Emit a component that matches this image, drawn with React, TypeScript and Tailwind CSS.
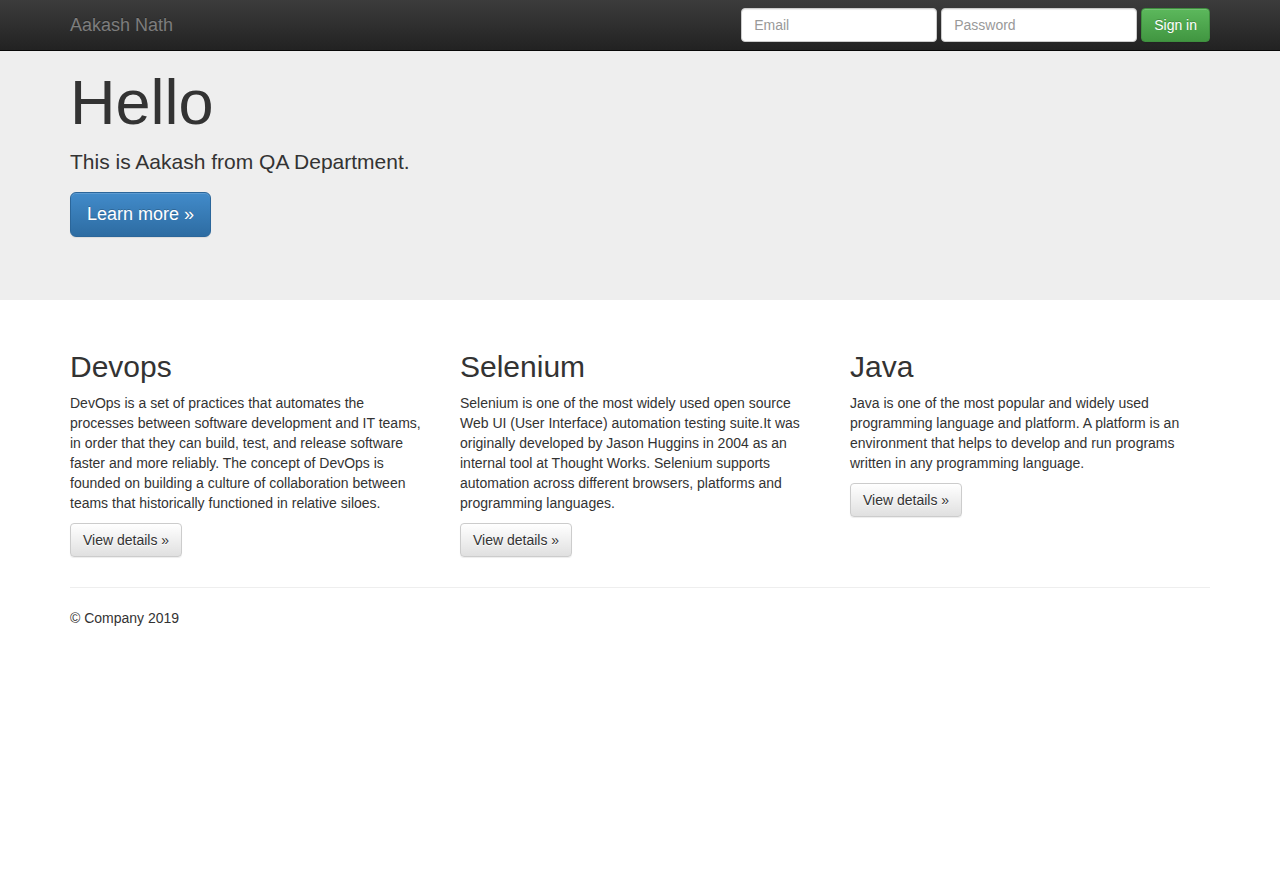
import React from "react";

const cols = [
  {
    title: "Devops",
    text: "DevOps is a set of practices that automates the processes between software development and IT teams, in order that they can build, test, and release software faster and more reliably. The concept of DevOps is founded on building a culture of collaboration between teams that historically functioned in relative siloes.",
  },
  {
    title: "Selenium",
    text: "Selenium is one of the most widely used open source Web UI (User Interface) automation testing suite.It was originally developed by Jason Huggins in 2004 as an internal tool at Thought Works. Selenium supports automation across different browsers, platforms and programming languages.",
  },
  {
    title: "Java",
    text: "Java is one of the most popular and widely used programming language and platform. A platform is an environment that helps to develop and run programs written in any programming language.",
  },
];

export default function App() {
  return (
    <div
      className="min-h-[879px] bg-white text-[#333] text-[14px] leading-[20px]"
      style={{ fontFamily: '"Liberation Sans", Arial, Helvetica, sans-serif' }}
    >
      <nav className="h-[51px] border-b border-[#080808] bg-[linear-gradient(to_bottom,#3c3c3c_0%,#222222_100%)]">
        <div className="w-[1170px] mx-auto px-[15px] flex items-start justify-between">
          <a className="block h-[50px] py-[15px] text-[18px] leading-[20px] text-[#7d7d7d] [text-shadow:0_-1px_0_rgba(0,0,0,0.25)]">
            Aakash Nath
          </a>
          <form className="flex items-center gap-[4px] mt-[8px]">
            <input
              placeholder="Email"
              className="w-[196px] h-[34px] px-[12px] py-[6px] text-[14px] leading-[20px] text-[#555] bg-white border border-[#ccc] rounded-[4px] shadow-[inset_0_1px_1px_rgba(0,0,0,0.075)] placeholder:text-[#999] outline-none"
            />
            <input
              placeholder="Password"
              type="password"
              className="w-[196px] h-[34px] px-[12px] py-[6px] text-[14px] leading-[20px] text-[#555] bg-white border border-[#ccc] rounded-[4px] shadow-[inset_0_1px_1px_rgba(0,0,0,0.075)] placeholder:text-[#999] outline-none"
            />
            <button
              type="button"
              className="h-[34px] px-[12px] py-[6px] text-[14px] leading-[20px] text-white border border-[#3e8f3e] rounded-[4px] bg-[linear-gradient(to_bottom,#5cb85c_0%,#419641_100%)] [text-shadow:0_-1px_0_rgba(0,0,0,0.2)] shadow-[inset_0_1px_0_rgba(255,255,255,0.15),0_1px_1px_rgba(0,0,0,0.075)]"
            >
              Sign in
            </button>
          </form>
        </div>
      </nav>

      <div className="bg-[#eeeeee] h-[249px]">
        <div className="w-[1170px] mx-auto px-[15px] pt-[17px]">
          <h1 className="text-[63px] leading-[1.1] font-normal mb-[10px]">Hello</h1>
          <p className="text-[21px] leading-[30px] font-[200] mb-[15px]">
            This is Aakash from QA Department.
          </p>
          <p>
            <a className="inline-block px-[16px] py-[10px] text-[18px] leading-[23px] text-white border border-[#2b669a] rounded-[6px] bg-[linear-gradient(to_bottom,#428bca_0%,#2d6ca2_100%)] [text-shadow:0_-1px_0_rgba(0,0,0,0.2)] shadow-[inset_0_1px_0_rgba(255,255,255,0.15),0_1px_1px_rgba(0,0,0,0.075)]">
              Learn more »
            </a>
          </p>
        </div>
      </div>

      <div className="w-[1170px] mx-auto px-[15px] pt-[30px]">
        <div className="grid grid-cols-3 -mx-[15px]">
          {cols.map((c) => (
            <div key={c.title} className="px-[15px]">
              <h2 className="text-[30px] leading-[33px] font-normal mt-[20px] mb-[10px]">{c.title}</h2>
              <p className="mb-[10px]">{c.text}</p>
              <p>
                <a className="inline-block px-[12px] py-[6px] text-[14px] leading-[20px] text-[#333] border border-[#ccc] rounded-[4px] bg-[linear-gradient(to_bottom,#ffffff_0%,#e0e0e0_100%)] [text-shadow:0_1px_0_#fff] shadow-[inset_0_1px_0_rgba(255,255,255,0.15),0_1px_1px_rgba(0,0,0,0.075)]">
                  View details »
                </a>
              </p>
            </div>
          ))}
        </div>
        <hr className="mt-[30px] mb-[20px] border-0 border-t border-[#eee]" />
        <footer>
          <p>© Company 2019</p>
        </footer>
      </div>
    </div>
  );
}
